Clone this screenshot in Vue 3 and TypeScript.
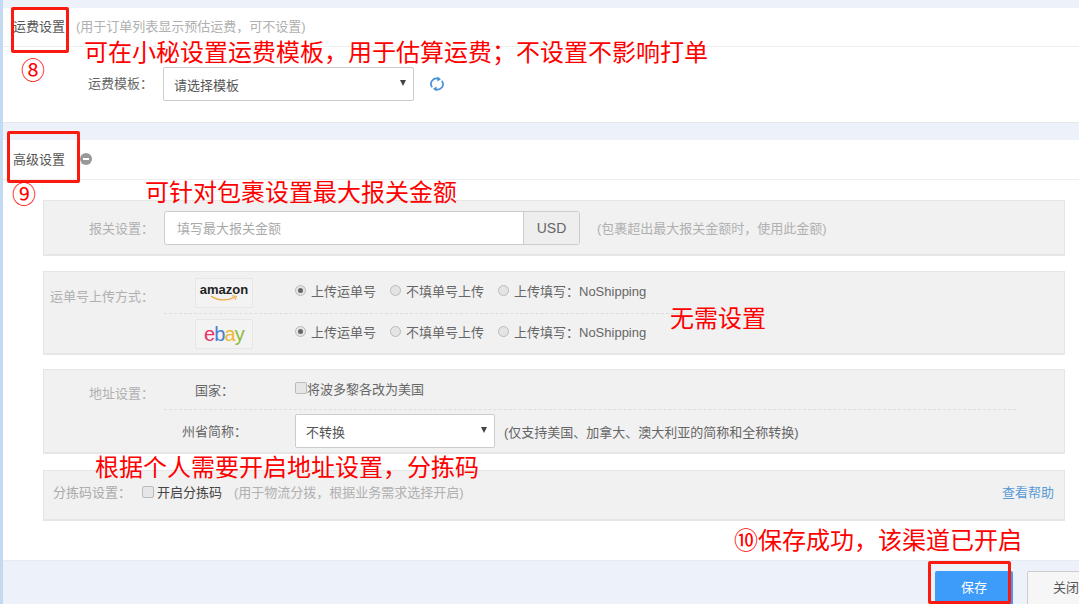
<script setup lang="ts">
interface Platform { name: string; cls: string }
const platforms: Platform[] = [
  { name: 'amazon', cls: 'amazon' },
  { name: 'ebay', cls: 'ebay' },
]
const notes = [
  { text: '可在小秘设置运费模板\uFF0C用于估算运费\uFF1B不设置不影响打单', cls: 'n1' },
  { text: '⑧', cls: 'n2' },
  { text: '⑨', cls: 'n3' },
  { text: '可针对包裹设置最大报关金额', cls: 'n4' },
  { text: '无需设置', cls: 'n5' },
  { text: '根据个人需要开启地址设置\uFF0C分拣码', cls: 'n6' },
  { text: '⑩保存成功\uFF0C该渠道已开启', cls: 'n7' },
]
</script>

<template>
  <div class="page">
    <section class="card first">
      <header class="head">
        <span class="title">运费设置</span>
        <span class="hint">(用于订单列表显示预估运费&#xFF0C;可不设置)</span>
      </header>
      <div class="tpl-row">
        <label class="tpl-label">运费模板&#xFF1A;</label>
        <div class="select tpl-select"><span>请选择模板</span><i class="caret"></i></div>
        <svg class="refresh" width="16" height="16" viewBox="0 0 16 16" fill="none" stroke="#4a90d9" stroke-width="1.7">
          <path d="M3.2 11.200A5.400 5.400 0 0 1 9.800 3" />
          <path d="M12.800 4.800A5.400 5.400 0 0 1 6.200 13" />
          <path d="M8.400.4l3.600 2.800-3.600 2.400z" fill="#4a90d9" stroke="none" />
          <path d="M7.600 15.600l-3.600-2.800 3.600-2.400z" fill="#4a90d9" stroke="none" />
        </svg>
      </div>
    </section>

    <section class="card second">
      <header class="head adv">
        <span class="title">高级设置</span>
        <i class="minus"></i>
      </header>

      <div class="box customs">
        <label class="box-label w1">报关设置&#xFF1A;</label>
        <div class="group">
          <span class="ph">填写最大报关金额</span>
          <span class="addon">USD</span>
        </div>
        <span class="hint customs-hint">(包裹超出最大报关金额时&#xFF0C;使用此金额)</span>
      </div>

      <div class="box upload">
        <label class="box-label w2">运单号上传方式&#xFF1A;</label>
        <div class="rows">
          <div v-for="p in platforms" :key="p.name" class="up-row">
            <div class="logo">
              <span v-if="p.cls === 'amazon'" class="amazon">amazon<svg class="smile" width="30" height="7" viewBox="0 0 30 7" fill="none"><path d="M2 1c7 5 17 5 24 1" stroke="#f0a63c" stroke-width="1.400"/><path d="M23 .8l4.500.6-1.500 3.600" stroke="#f0a63c" stroke-width="1"/></svg></span>
              <span v-else class="ebay"><b class="e">e</b><b class="b">b</b><b class="a">a</b><b class="y">y</b></span>
            </div>
            <label class="radio r1"><i class="dot on"></i>上传运单号</label>
            <label class="radio r2"><i class="dot"></i>不填单号上传</label>
            <label class="radio r3"><i class="dot"></i>上传填写&#xFF1A;NoShipping</label>
          </div>
        </div>
      </div>

      <div class="box addr">
        <label class="box-label w3">地址设置&#xFF1A;</label>
        <div class="addr-rows">
          <div class="addr-row top">
            <span class="addr-key country">国家&#xFF1A;</span>
            <label class="chk-line"><i class="chk"></i>将波多黎各改为美国</label>
          </div>
          <div class="addr-row bottom">
            <span class="addr-key state">州省简称&#xFF1A;</span>
            <div class="select st-select"><span>不转换</span><i class="caret"></i></div>
            <span class="st-hint">(仅支持美国、加拿大、澳大利亚的简称和全称转换)</span>
          </div>
        </div>
      </div>

      <div class="box sort">
        <label class="sort-label">分拣码设置&#xFF1A;</label>
        <i class="chk sort-chk"></i>
        <span class="sort-text">开启分拣码</span>
        <span class="hint sort-hint">(用于物流分拨&#xFF0C;根据业务需求选择开启)</span>
        <a class="help">查看帮助</a>
      </div>
    </section>

    <footer class="foot">
      <button class="btn save">保存</button>
      <button class="btn close">关闭</button>
    </footer>

    <i class="mark m1"></i>
    <i class="mark m2"></i>
    <i class="mark m3"></i>
    <span v-for="n in notes" :key="n.cls" class="note" :class="n.cls">{{ n.text }}</span>
  </div>
</template>

<style>
html, body { margin: 0; padding: 0; overflow: hidden; }
</style>

<style scoped>
.page {
  position: relative;
  width: 1079px;
  height: 604px;
  overflow: hidden;
  box-sizing: border-box;
  padding: 8px 0 0 3px;
  display: flex;
  flex-direction: column;
  background: #edf1f9;
  font-family: "Liberation Sans", "Noto Sans CJK SC", sans-serif;
  font-size: 13px;
  color: #666;
}
.page::before {
  content: "";
  position: absolute;
  left: 0;
  top: 0;
  bottom: 0;
  width: 3px;
  background: #c3daf3;
}
.card { background: #fff; flex: none; }
.first { height: 114px; box-sizing: border-box; box-shadow: 0 1px 0 #e3e7ee; }
.second { margin-top: 18px; height: 420px; box-sizing: border-box; }
.head {
  height: 39px;
  box-sizing: border-box;
  border-bottom: 1px solid #eee;
  padding: 0 0 4px 10px;
  display: flex;
  align-items: center;
  gap: 11px;
}
.title { color: #555; font-size: 13px; }
.hint { color: #b0b0b0; font-size: 13px; white-space: nowrap; }
.tpl-row { display: flex; align-items: center; margin-top: 20px; padding-left: 85px; }
.tpl-label { width: 75px; color: #666; font-size: 13px; margin-top: -3px; white-space: nowrap; }
.select {
  box-sizing: border-box;
  height: 34px;
  background: #fff;
  border: 1px solid #ccc;
  border-radius: 2px;
  display: flex;
  align-items: center;
  justify-content: space-between;
  padding: 0 7px 0 10px;
  font-size: 13px;
  color: #555;
}
.tpl-select { width: 251px; }
.caret {
  width: 0;
  height: 0;
  border-left: 3px solid transparent;
  border-right: 3px solid transparent;
  border-top: 6px solid #444;
  margin-top: -2px;
}
.refresh { margin-left: 15px; }
.adv { height: 40px; gap: 15px; padding-bottom: 2px; }
.minus {
  width: 12px;
  height: 12px;
  border-radius: 50%;
  background: #999;
  position: relative;
}
.minus::after {
  content: "";
  position: absolute;
  left: 3px;
  right: 3px;
  top: 5px;
  height: 2px;
  background: #fff;
}
.box {
  box-sizing: border-box;
  width: 1022px;
  margin-left: 40px;
  background: #f1f1f1;
  border: 1px solid #e6e6e6;
  border-bottom-width: 2px;
}
.customs { margin-top: 20px; height: 56px; display: flex; align-items: center; }
.box-label { color: #b0b0b0; font-size: 13px; text-align: right; flex: none; white-space: nowrap; }
.w1 { width: 110px; }
.group {
  margin-left: 10px;
  width: 416px;
  height: 34px;
  box-sizing: border-box;
  border: 1px solid #ccc;
  border-radius: 3px;
  background: #fff;
  display: flex;
  align-items: center;
  justify-content: space-between;
  overflow: hidden;
}
.ph { padding-left: 12px; color: #aaa; font-size: 13px; }
.addon {
  width: 55px;
  height: 100%;
  background: #eee;
  border-left: 1px solid #ccc;
  display: flex;
  align-items: center;
  justify-content: center;
  font-size: 14px;
  color: #666;
}
.customs-hint { margin-left: 17px; }
.upload { margin-top: 15px; height: 84px; display: flex; }
.w2 { width: 110px; margin-top: 14px; }
.rows { margin-left: 10px; width: 520px; }
.up-row { height: 40px; position: relative; display: flex; align-items: center; }
.up-row:first-child { border-bottom: 1px dashed #ddd; height: 41px; }
.logo {
  box-sizing: border-box;
  margin-left: 31px;
  width: 58px;
  height: 30px;
  border: 1px solid #e6e6e6;
  border-radius: 2px;
  background: #f3f3f3;
  display: flex;
  align-items: center;
  justify-content: center;
  flex: none;
}
.amazon {
  position: relative;
  font-family: "Liberation Sans", sans-serif;
  font-weight: 700;
  font-size: 13px;
  color: #222;
  line-height: 12px;
  margin-top: -6px;
}
.smile { position: absolute; left: 9px; top: 11px; }
.ebay { font-family: "Liberation Sans", sans-serif; font-size: 20px; letter-spacing: -0.9px; line-height: 1; margin-top: -1px; }
.ebay b { font-weight: 400; }
.e { color: #e53267; }
.b { color: #4a7fd0; }
.a { color: #f0b83a; }
.y { color: #8bbd3c; }
.radio { display: flex; align-items: center; font-size: 13px; color: #666; white-space: nowrap; position: absolute; margin-top: -4px; }
.up-row:last-child .radio { margin-top: -6px; }
.r1 { left: 131px; }
.r2 { left: 226px; }
.r3 { left: 334px; }
.dot {
  width: 11px;
  height: 11px;
  box-sizing: border-box;
  border-radius: 50%;
  border: 1px solid #bbb;
  background: #e4e4e4;
  margin-right: 5px;
  position: relative;
}
.dot.on::after {
  content: "";
  position: absolute;
  left: 2px;
  top: 2px;
  width: 5px;
  height: 5px;
  border-radius: 50%;
  background: #666;
}
.addr { margin-top: 14px; height: 85px; display: flex; }
.w3 { width: 110px; margin-top: 13px; }
.addr-rows { margin-left: 10px; width: 852px; }
.addr-row { position: relative; display: flex; align-items: center; }
.addr-row.top { height: 39px; border-bottom: 1px dashed #ddd; }
.addr-row.bottom { height: 42px; }
.addr-key { color: #666; font-size: 13px; white-space: nowrap; }
.country { margin-left: 31px; width: 100px; }
.state { margin-left: 18px; width: 113px; margin-top: -2px; }
.chk-line { display: flex; align-items: center; color: #666; font-size: 13px; margin-top: -3px; }
.chk {
  width: 12px;
  height: 12px;
  box-sizing: border-box;
  border: 1px solid #bbb;
  border-radius: 2px;
  background: #e6e6e6;
  flex: none;
}
.st-select { width: 200px; }
.st-hint { margin-left: 9px; color: #666; font-size: 13px; white-space: nowrap; }
.sort { margin-top: 16px; height: 51px; display: flex; align-items: center; padding-bottom: 7px; }
.sort-label { color: #aaa; font-size: 13px; margin-left: 9px; width: 89px; white-space: nowrap; }
.sort-chk { margin-right: 3px; }
.sort-text { color: #444; font-size: 13px; }
.sort-hint { margin-left: 12px; }
.help { margin-left: auto; margin-right: 10px; color: #5b9bd5; font-size: 13px; }
.foot {
  flex: none;
  height: 44px;
  box-sizing: border-box;
  overflow: hidden;
  display: flex;
  align-items: flex-start;
  padding: 10px 0 0 932px;
  gap: 14px;
  border-top: 1px solid #e6eaf2;
}
.btn {
  font-family: inherit;
  font-size: 13px;
  height: 44px;
  flex: none;
  border-radius: 2px;
  padding: 0;
}
.save { width: 78px; background: #3d9bfa; border: 0; color: #fff; padding-bottom: 13px; }
.close { width: 78px; background: #f6f6f6; border: 1px solid #ccc; color: #555; text-align: left; padding: 0 0 13px 25px; }
.mark {
  position: absolute;
  box-sizing: border-box;
  border: 3px solid #fb1a10;
  border-radius: 2px;
}
.m1 { left: 11px; top: 7px; width: 58px; height: 46px; }
.m2 { left: 7px; top: 131px; width: 73px; height: 52px; }
.m3 { left: 928px; top: 561px; width: 83px; height: 43px; }
.note {
  position: absolute;
  color: #ff0000;
  font-size: 24px;
  line-height: 30px;
  white-space: nowrap;
}
.n1 { left: 84px; top: 38px; }
.n2 { left: 21px; top: 56px; }
.n3 { left: 12px; top: 180px; }
.n4 { left: 145px; top: 178px; }
.n5 { left: 670px; top: 304px; }
.n6 { left: 95px; top: 453px; }
.n7 { left: 734px; top: 526px; }
</style>
